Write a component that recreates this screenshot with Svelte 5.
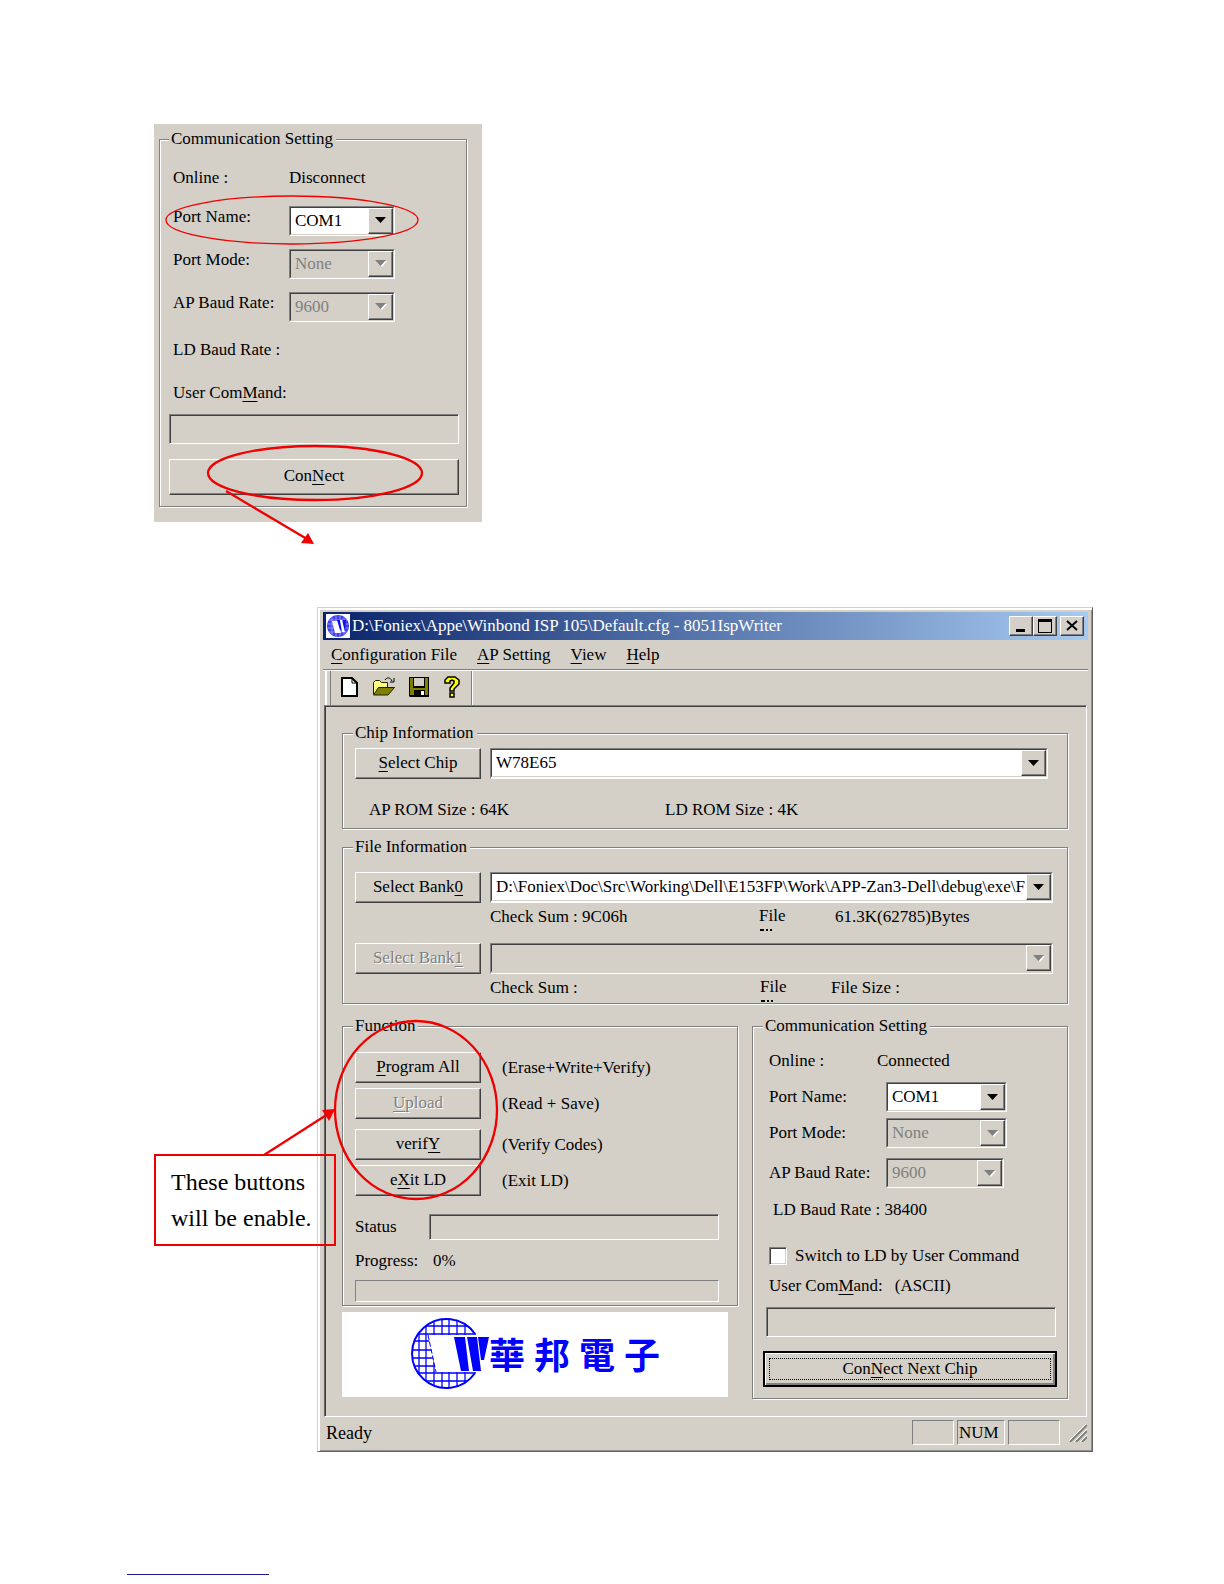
<script>
  let port = $state('COM1');
  let nextPort = $state('COM1');
  let switchToLd = $state(false);
</script>

{#snippet arrow()}
  <span class="arrow" aria-hidden="true">
    <svg width="12" height="7" viewBox="0 0 12 7"><path class="tri-light" d="M2 1h10L7 7z" /><path class="tri" d="M0 0h11L5.500 6z" /></svg>
  </span>
{/snippet}

{#snippet clipped()}
  <svg width="14" height="2" viewBox="0 0 14 2" aria-hidden="true"><path d="M1 0h4v2H1zM7 0h2v2H7zM11 0h2v2h-2z" /></svg>
{/snippet}

<main class="page">
  <section class="panel">
    <fieldset class="group comm-first">
      <legend>Communication Setting</legend>
      <div class="row"><span>Online :</span><span>Disconnect</span></div>
      <div class="row raised">
        <label for="p1-name">Port Name:</label>
        <span class="combo"><select id="p1-name" bind:value={port}><option>COM1</option></select>{@render arrow()}</span>
      </div>
      <div class="row raised">
        <label for="p1-mode">Port Mode:</label>
        <span class="combo off"><select id="p1-mode" disabled><option>None</option></select>{@render arrow()}</span>
      </div>
      <div class="row raised">
        <label for="p1-baud">AP Baud Rate:</label>
        <span class="combo off"><select id="p1-baud" disabled><option>9600</option></select>{@render arrow()}</span>
      </div>
      <div class="row"><span>LD Baud Rate :</span></div>
      <div class="row"><label for="p1-cmd">User Com<u>M</u>and:</label></div>
      <input id="p1-cmd" class="field cmd" type="text" disabled />
      <button class="btn connect" type="button">Con<u>N</u>ect</button>
    </fieldset>
    <svg class="marks" width="328" height="424" viewBox="0 0 328 424" aria-hidden="true">
      <ellipse class="thin" cx="138" cy="96" rx="126" ry="24" />
      <ellipse cx="161" cy="349" rx="107" ry="27" />
      <path d="M72 367L153 415" />
      <path class="head" d="M160 420l-13-1 7-10z" />
    </svg>
  </section>

  <section class="window">
    <header class="titlebar">
      <svg class="app-icon" width="24" height="24" viewBox="0 0 24 24" aria-hidden="true">
        <path fill="#fff" d="M0 0h24v24H0z" />
        <circle cx="12" cy="12" r="11" fill="#4040f0" />
        <path d="M3 6h18M1 10h22M1 14h22M3 18h18M6 3v18M10 1v22M14 1v22M18 3v18" stroke="#9090ff" fill="none" />
        <path fill="#fff" d="M6 7h6l3 12H9z" />
        <path fill="#1010e8" d="M11 6h3l2 10h-2zM17 6h3l-1 12h-2z" />
        <path fill="#fff" d="M14 6h2l3 12h-3z" />
      </svg>
      <h1>D:\Foniex\Appe\Winbond ISP 105\Default.cfg - 8051IspWriter</h1>
      <div class="controls">
        <button type="button" aria-label="Minimize"><svg width="16" height="14" viewBox="0 0 16 14"><path d="M3 10h9v3H3z" /></svg></button>
        <button type="button" aria-label="Maximize"><svg width="16" height="14" viewBox="0 0 16 14"><path fill-rule="evenodd" d="M1 0h14v14H1zM2 3v10h12V3z" /></svg></button>
        <button class="close" type="button" aria-label="Close"><svg width="16" height="14" viewBox="0 0 16 14"><path d="M3 2l10 9M13 2L3 11" stroke="#000" stroke-width="2" /></svg></button>
      </div>
    </header>

    <nav class="menu">
      <button type="button"><u>C</u>onfiguration File</button>
      <button type="button"><u>A</u>P Setting</button>
      <button type="button"><u>V</u>iew</button>
      <button type="button"><u>H</u>elp</button>
    </nav>

    <div class="toolbar">
      <div class="tools">
        <button type="button" aria-label="New"><svg width="22" height="22" viewBox="0 0 22 22"><path d="M4 2h10l5 5v13H4z" fill="#fff" stroke="#000" stroke-width="2" /><path d="M14 2v5h5" fill="none" stroke="#000" /></svg></button>
        <button type="button" aria-label="Open"><svg width="24" height="22" viewBox="0 0 24 22"><path d="M1.500 18V6.500l2-2h4l2 2h6v5" fill="#ffff80" stroke="#202000" /><path d="M1.500 19l5-7.500h16L16 19z" fill="#808000" stroke="#202000" /><path d="M13 4c2-3 5-3 7 1M22 2v4h-4" fill="none" stroke="#000" /></svg></button>
        <button type="button" aria-label="Save"><svg width="22" height="22" viewBox="0 0 22 22"><path d="M1 1h20v20H2l-1-1z" fill="#000" /><path d="M2 2h3v10h12V2h3v17h-3v-5H6v5H2z" fill="#808000" /><path d="M6 2h10v8H6z" fill="#d4d0c8" /><path d="M13 15h3v4h-3z" fill="#fff" /></svg></button>
        <button type="button" aria-label="Help"><svg width="20" height="22" viewBox="0 0 20 22"><path d="M3 7V4l3-3h7l4 3v4l-5 5v2H8v-3l4-5V5l-2-1-2 1v2zM8 17h4v4H8z" fill="#ff0" stroke="#000" stroke-width="1.500" /></svg></button>
      </div>
    </div>

    <div class="client">
      <fieldset class="group chip">
        <legend>Chip Information</legend>
        <div class="pick">
          <button class="btn" type="button"><u>S</u>elect Chip</button>
          <span class="combo wide"><select aria-label="Chip"><option>W78E65</option></select>{@render arrow()}</span>
        </div>
        <div class="rom"><span>AP ROM Size : 64K</span><span>LD ROM Size : 4K</span></div>
      </fieldset>

      <fieldset class="group file">
        <legend>File Information</legend>
        <div class="pick">
          <button class="btn" type="button">Select Bank<u>0</u></button>
          <span class="combo"><select aria-label="Bank 0 file"><option>D:\Foniex\Doc\Src\Working\Dell\E153FP\Work\APP-Zan3-Dell\debug\exe\F</option></select>{@render arrow()}</span>
        </div>
        <div class="sum"><span>Check Sum : 9C06h</span><span class="cut">File{@render clipped()}</span><span>61.3K(62785)Bytes</span></div>
        <div class="pick second">
          <button class="btn" type="button" disabled>Select Bank<u>1</u></button>
          <span class="combo off"><select aria-label="Bank 1 file" disabled><option></option></select>{@render arrow()}</span>
        </div>
        <div class="sum low"><span>Check Sum :</span><span class="cut">File{@render clipped()}</span><span>File Size :</span></div>
      </fieldset>

      <div class="columns">
        <div class="left">
          <fieldset class="group function">
            <legend>Function</legend>
            <div class="actions">
              <button class="btn" type="button"><u>P</u>rogram All</button><span>(Erase+Write+Verify)</span>
              <button class="btn" type="button" disabled><u>U</u>pload</button><span>(Read + Save)</span>
            </div>
            <div class="actions lower">
              <button class="btn" type="button">verif<u>Y</u></button><span>(Verify Codes)</span>
              <button class="btn" type="button">e<u>X</u>it LD</button><span>(Exit LD)</span>
            </div>
            <div class="status"><label for="status">Status</label><input id="status" class="field" type="text" disabled /></div>
            <div class="progress"><span>Progress:</span><span>0%</span></div>
            <div class="bar" role="progressbar" aria-label="Progress" aria-valuenow="0"></div>
          </fieldset>
          <div class="logo">
            <svg width="78" height="74" viewBox="0 0 78 74" aria-hidden="true">
              <clipPath id="disc"><circle cx="36" cy="37" r="35" /></clipPath>
              <g clip-path="url(#disc)" fill="none" stroke="#00f" stroke-width="1.300">
                <path d="M8 0v74M15 0v74M23 0v74M31 0v74M38 0v74M46 0v74M54 0v74M0 10h65M0 18h65M0 25h24M0 34h24M0 42h24M0 50h24M0 57h65M0 65h65" />
              </g>
              <path d="M64 18A34.500 34.500 0 1 0 64 57" fill="none" stroke="#00f" stroke-width="2" />
              <path d="M17 19h60v37H25z" fill="#fff" />
              <path d="M17 19l8 37" fill="none" stroke="#00f" stroke-dasharray="5 2" />
              <path d="M43 21h11l4 34h-8zM56 21h10l4 34h-8zM67 21h11l-5 23h-3z" fill="#00f" />
            </svg>
            <div class="name"><span>華</span><span>邦</span><span>電</span><span>子</span></div>
          </div>
        </div>

        <fieldset class="group comm">
          <legend>Communication Setting</legend>
          <div class="row"><span>Online :</span><span class="value">Connected</span></div>
          <div class="row">
            <label for="p2-name">Port Name:</label>
            <span class="combo"><select id="p2-name" bind:value={nextPort}><option>COM1</option></select>{@render arrow()}</span>
          </div>
          <div class="row">
            <label for="p2-mode">Port Mode:</label>
            <span class="combo off"><select id="p2-mode" disabled><option>None</option></select>{@render arrow()}</span>
          </div>
          <div class="row tall">
            <label for="p2-baud">AP Baud Rate:</label>
            <span class="combo off"><select id="p2-baud" disabled><option>9600</option></select>{@render arrow()}</span>
          </div>
          <div class="line ld">LD Baud Rate : 38400</div>
          <label class="line check"><input type="checkbox" bind:checked={switchToLd} />Switch to LD by User Command</label>
          <label class="line ascii" for="p2-cmd"><span>User Com<u>M</u>and:</span><span>(ASCII)</span></label>
          <input id="p2-cmd" class="field cmd" type="text" disabled />
          <button class="btn default" type="button"><span>Con<u>N</u>ect Next Chip</span></button>
        </fieldset>
      </div>
    </div>

    <footer class="statusbar">
      <span class="ready">Ready</span>
      <span class="cell"></span>
      <span class="cell num">NUM</span>
      <span class="cell last"></span>
      <svg width="18" height="18" viewBox="0 0 18 18" aria-hidden="true"><path d="M1 18L18 1M7 18L18 7M13 18l5-5" stroke="#808080" stroke-width="2" /><path d="M-1 18L17 0M5 18L18 5M11 18l7-7" stroke="#fff" /></svg>
    </footer>

    <svg class="marks" width="200" height="600" viewBox="0 0 200 600" aria-hidden="true">
      <ellipse cx="98" cy="502" rx="81" ry="89" />
      <path d="M-54 547L10 506" />
      <path class="head" d="M17 501l-13 1 7 11z" />
    </svg>
    <p class="callout">These buttons will be enable.</p>
  </section>

  <hr />
</main>

<style>
  :global(body) {
    margin: 0;
    background: #fff;
  }
  .page {
    padding: 124px 0 8px;
    font: 17px/20px 'Liberation Serif', 'Noto Sans CJK TC', serif;
    color: #000;
  }
  .page * {
    box-sizing: border-box;
  }
  button,
  input,
  select {
    font: inherit;
    color: inherit;
    margin: 0;
  }
  u {
    text-underline-offset: 3px;
  }
  .panel {
    position: relative;
    width: 328px;
    margin-left: 154px;
    padding: 5px 15px 15px 5px;
    background: #d4d0c8;
  }
  .group {
    min-width: 0;
    margin: 0;
    padding: 0;
    border: 1px solid #808080;
    box-shadow: 1px 1px 0 #fff, inset 1px 1px 0 #fff;
  }
  legend {
    padding: 0 3px 0 2px;
    background: #d4d0c8;
    line-height: 20px;
  }
  .client legend {
    margin-left: -2px;
  }
  .comm-first {
    padding: 7px 7px 11px 9px;
  }
  .row {
    display: grid;
    grid-template-columns: 117px 1fr;
    align-items: center;
    height: 36px;
  }
  .comm-first .row {
    grid-template-columns: 116px 1fr;
    height: 43px;
    margin-left: 4px;
  }
  .raised label {
    padding-bottom: 8px;
  }
  .comm-first .combo {
    width: 106px;
  }
  .combo {
    display: grid;
    grid-template: 28px / minmax(0, 1fr);
    border: 1px solid;
    border-color: #808080 #fff #fff #808080;
    background: #fff;
  }
  .combo select {
    grid-area: 1 / 1;
    appearance: none;
    width: 100%;
    height: 100%;
    padding: 0 26px 0 4px;
    border: 1px solid;
    border-color: #404040 #d4d0c8 #d4d0c8 #404040;
    border-radius: 0;
    background: transparent;
    opacity: 1;
  }
  .combo.off {
    background: #d4d0c8;
    color: #808080;
  }
  .arrow {
    grid-area: 1 / 1;
    justify-self: end;
    display: grid;
    place-items: center;
    width: 25px;
    margin: 1px;
    border: 1px solid;
    border-color: #fff #404040 #404040 #fff;
    box-shadow: inset -1px -1px 0 #808080;
    background: #d4d0c8;
    pointer-events: none;
  }
  .tri-light {
    fill: none;
  }
  .off .tri {
    fill: #808080;
  }
  .off .tri-light {
    fill: #fff;
  }
  .field {
    display: block;
    width: 100%;
    height: 30px;
    padding: 0 4px;
    border: 1px solid;
    border-color: #808080 #fff #fff #808080;
    border-radius: 0;
    box-shadow: inset 1px 1px 0 #404040;
    background: #d4d0c8;
  }
  .btn {
    display: block;
    padding: 0 0 2px;
    border: 1px solid;
    border-color: #fff #404040 #404040 #fff;
    border-radius: 0;
    box-shadow: inset -1px -1px 0 #808080;
    background: #d4d0c8;
  }
  .btn:disabled {
    color: #808080;
    text-shadow: 1px 1px 0 #fff;
  }
  .connect {
    width: 100%;
    height: 36px;
    margin-top: 15px;
  }
  .marks {
    position: absolute;
    left: 0;
    top: 0;
    overflow: visible;
    pointer-events: none;
    fill: none;
    stroke: #f00000;
    stroke-width: 2.300;
  }
  .marks .thin {
    stroke-width: 1.300;
  }
  .marks .head {
    fill: #f00000;
    stroke: none;
  }

  .window {
    position: relative;
    margin: 85px 131px 0 317px;
    padding: 4px 4px 1px;
    border: 1px solid;
    border-color: #d4d0c8 #606060 #606060 #d4d0c8;
    box-shadow: inset 2px 2px 0 #fff, inset -1px -1px 0 #909090;
    background: #d4d0c8;
  }
  .titlebar {
    display: flex;
    align-items: center;
    height: 28px;
    margin-left: 1px;
    padding: 0 4px 0 3px;
    background: linear-gradient(90deg, #0a246a, #a6caf0);
    color: #fff;
  }
  h1 {
    flex: 1;
    margin: 0 0 0 2px;
    font-size: 17px;
    font-weight: 400;
    white-space: nowrap;
  }
  .controls {
    display: flex;
  }
  .controls button {
    display: grid;
    place-items: center;
    width: 24px;
    height: 20px;
    padding: 0;
    border: 1px solid;
    border-color: #fff #404040 #404040 #fff;
    box-shadow: inset -1px -1px 0 #808080;
    background: #d4d0c8;
  }
  .controls .close {
    margin-left: 3px;
  }
  .menu {
    display: flex;
    gap: 20px;
    height: 30px;
    margin-left: 1px;
    padding-left: 8px;
    border-bottom: 1px solid #808080;
  }
  .menu button {
    padding: 0;
    border: 0;
    background: none;
  }
  .toolbar {
    height: 35px;
    margin-left: 1px;
    padding-left: 3px;
    border-top: 1px solid #fff;
  }
  .tools {
    display: flex;
    gap: 12px;
    align-items: center;
    width: 147px;
    height: 34px;
    padding: 0 0 2px 11px;
    border-left: 1px solid #fff;
    border-right: 1px solid #fff;
    box-shadow: inset 3px 0 0 #d4d0c8, inset 4px 0 0 #808080, -1px 0 0 #fff, inset -1px 0 0 #808080;
  }
  .tools button {
    display: block;
    padding: 0;
    border: 0;
    background: none;
    line-height: 0;
  }
  .client {
    margin: 0 1px 0 2px;
    padding: 17px 18px 17px 17px;
    border: 1px solid;
    border-color: #808080 #fff #fff #606060;
    box-shadow: inset 1px 1px 0 #404040;
  }
  .chip {
    padding: 5px 19px 7px 12px;
  }
  .pick {
    display: grid;
    grid-template-columns: 126px minmax(0, 1fr);
    gap: 9px;
  }
  .pick .btn {
    height: 31px;
  }
  .rom {
    display: grid;
    grid-template-columns: 296px 1fr;
    margin: 20px 0 0 14px;
    line-height: 22px;
  }
  .file {
    margin-top: 8px;
    padding: 15px 14px 1px 12px;
  }
  .sum {
    display: grid;
    grid-template-columns: 269px 76px 1fr;
    height: 28px;
    margin-left: 135px;
    line-height: 28px;
  }
  .low {
    grid-template-columns: 270px 71px 1fr;
  }
  .cut {
    line-height: 26px;
  }
  .cut svg {
    display: block;
  }
  .second {
    margin-top: 12px;
  }
  .columns {
    display: grid;
    grid-template-columns: minmax(0, 1fr) 316px;
    gap: 14px;
    margin-top: 12px;
  }
  .function {
    padding: 16px 18px 3px 12px;
  }
  .actions {
    display: grid;
    grid-template-columns: 126px 1fr;
    grid-auto-rows: 31px;
    align-items: center;
    gap: 5px 21px;
  }
  .actions .btn {
    height: 31px;
  }
  .lower {
    margin-top: 10px;
  }
  .status {
    display: grid;
    grid-template-columns: 74px 1fr;
    align-items: center;
    margin-top: 18px;
  }
  .status .field {
    height: 26px;
  }
  .progress {
    display: grid;
    grid-template-columns: 78px 1fr;
    margin-top: 10px;
    line-height: 22px;
  }
  .bar {
    height: 22px;
    margin-top: 8px;
    border: 1px solid;
    border-color: #808080 #fff #fff #808080;
  }
  .logo {
    display: flex;
    align-items: center;
    height: 85px;
    margin: 6px 10px 0 0;
    padding: 0 0 4px 69px;
    background: #fff;
  }
  .name {
    display: flex;
    gap: 9px;
    font: 700 36px/40px 'Noto Sans CJK TC', sans-serif;
    color: #00f;
  }
  .comm {
    padding: 7px 10px 11px;
  }
  .comm legend {
    margin-left: 0;
  }
  .comm .row {
    margin: 0 50px 0 6px;
  }
  .comm .value {
    margin-left: -9px;
  }
  .comm .tall {
    height: 44px;
    margin-right: 53px;
  }
  .line {
    display: flex;
    align-items: center;
    height: 28px;
    margin-left: 6px;
  }
  .ld {
    margin: 1px 0 0 10px;
  }
  .check {
    gap: 8px;
    margin-top: 18px;
  }
  .check input {
    appearance: none;
    width: 18px;
    height: 18px;
    border: 1px solid;
    border-color: #808080 #fff #fff #808080;
    box-shadow: inset 1px 1px 0 #404040, inset -1px -1px 0 #d4d0c8;
    background: #fff;
  }
  .check input:checked {
    background: #000;
  }
  .ascii {
    gap: 12px;
    margin-top: 2px;
  }
  .comm .cmd {
    width: auto;
    min-width: 290px;
    margin: 7px 3px 0;
  }
  .default {
    width: 100%;
    height: 36px;
    margin-top: 14px;
    padding: 4px;
    border: 2px solid #000;
    box-shadow: inset 1px 1px 0 #fff, inset -2px -2px 0 #808080;
  }
  .default span {
    display: block;
    border: 1px dotted #000;
    line-height: 20px;
  }
  .statusbar {
    display: flex;
    align-items: center;
    gap: 3px;
    height: 33px;
    padding: 0 1px 2px 4px;
  }
  .ready {
    flex: 1;
    font-size: 18px;
  }
  .cell {
    width: 42px;
    height: 25px;
    border: 1px solid;
    border-color: #808080 #fff #fff #808080;
    line-height: 23px;
  }
  .num {
    width: 48px;
    padding-left: 1px;
  }
  .last {
    width: 52px;
    margin-right: 6px;
  }
  .callout {
    position: absolute;
    left: -164px;
    top: 546px;
    width: 182px;
    margin: 0;
    padding: 8px 12px 8px 15px;
    border: 2px solid #f00000;
    font-size: 24px;
    line-height: 36px;
  }
  hr {
    width: 142px;
    height: 1px;
    margin: 122px 0 0 127px;
    border: 0;
    background: #1a1a8c;
  }
</style>
